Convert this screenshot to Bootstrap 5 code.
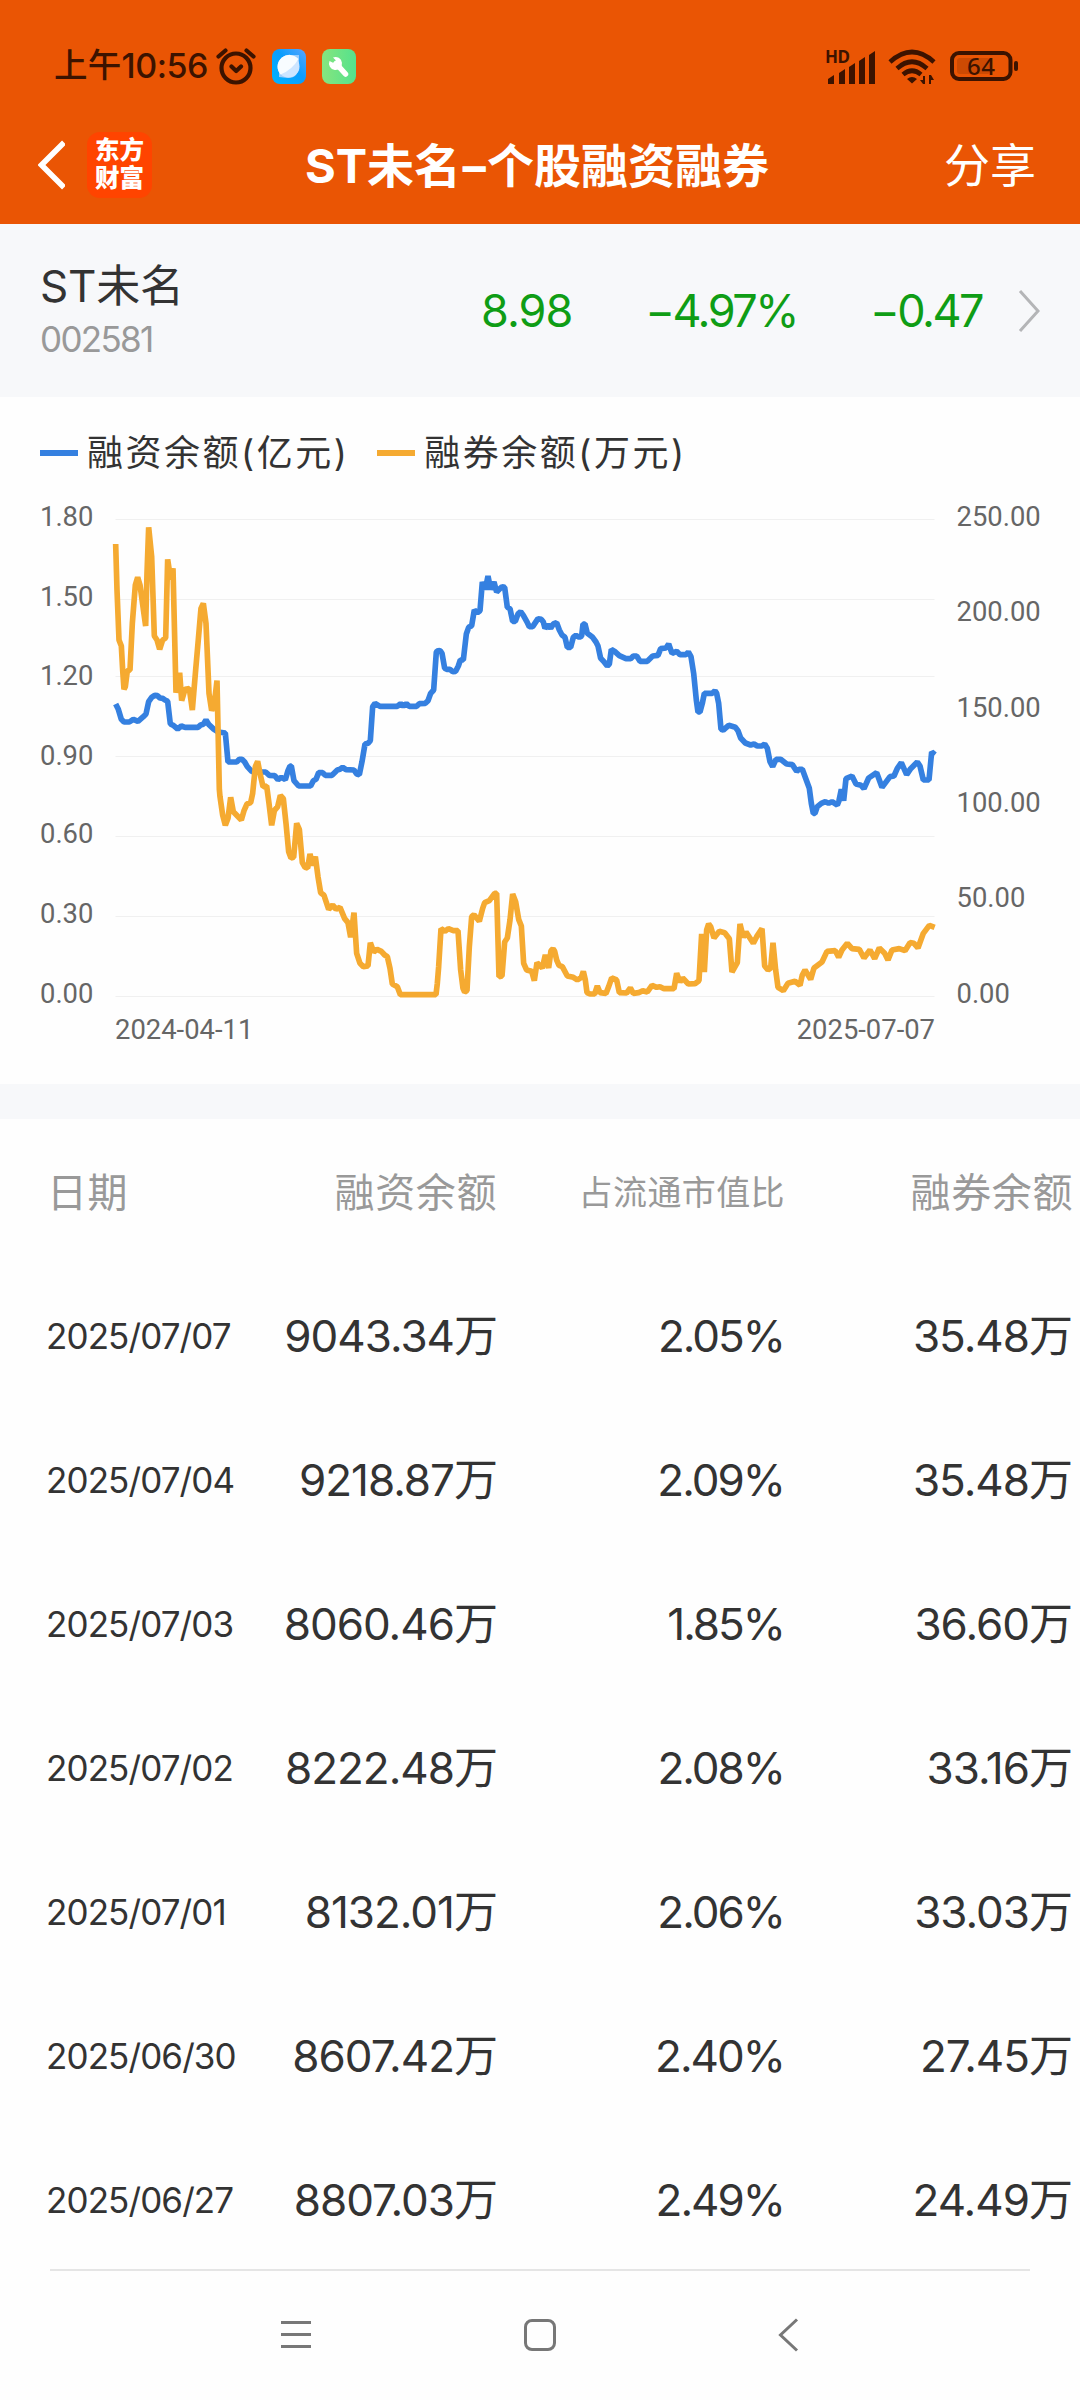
<!DOCTYPE html>
<html lang="zh-CN">
<head>
<meta charset="utf-8">
<meta name="viewport" content="width=device-width, initial-scale=1">
<title>ST未名-个股融资融券</title>
<link href="https://cdn.jsdelivr.net/npm/bootstrap@5.3.0/dist/css/bootstrap.min.css" rel="stylesheet">
<style>
body{width:1080px;height:2400px;overflow:hidden;background:#fefefe;color:#333;font-family:Inter,"Noto Sans CJK SC",sans-serif;line-height:1}
svg{display:block;flex:none}
.topbar{background:#ea5504;height:224px}
.statusbar{height:132px;padding:0 61px 0 54px;color:#3c1300}
.clock{font-size:34px;font-weight:500;letter-spacing:-.5px;width:162px;white-space:nowrap}
.clock .cjk{font-size:33.5px;letter-spacing:.3px}
.titlebar{height:66px;padding:0 44px 0 38px;color:#fff}
.brand{width:65px;height:66px;border-radius:13px;background:#ff4400;font:900 24.500px/28px "Noto Sans CJK SC",sans-serif;margin-left:22px;padding-top:3px}
.heading{font-size:47px;font-weight:700;white-space:nowrap}
.heading .dash{margin:0 -3px}
.share{font-size:46px}
.side{width:200px}
.quote{background:#f7f8fa;height:173px;padding:0 40px}
.code{font-size:35px;color:#999;letter-spacing:-1.700px}
.names{gap:14px}
.stock{font-size:44px;letter-spacing:-.2px}
.green{color:#0f9d15;font-size:45px;letter-spacing:-1px;white-space:nowrap}
.change{letter-spacing:-2.500px;margin-left:73px}
.legend{height:112px;padding:0 40px;font-size:36px;letter-spacing:2.500px}
.swatch{width:38px;height:6px;margin-right:9px}
.swatch.second{margin-left:28px}
.app-icon{margin-left:16px}
.arrow{margin-left:36px}
.chart{overflow:visible}
.chart text{font:27.400px Roboto,sans-serif;fill:#666}
.gap-band{height:35px;background:#f7f8fa}
.thead-line{height:145px;padding-top:2px;font-size:40px;color:#999;letter-spacing:.6px}
.record{height:144px;font-size:44px;letter-spacing:-1px}
.record.last-one{height:141px;padding-top:3px}
.c1{width:196px;padding-left:46px;font-size:35px;letter-spacing:-.9px}
.c2{width:301px}.c3{width:287px;letter-spacing:-2px}.c4{width:288px}
.c1,.c2,.c3,.c4{white-space:nowrap;flex:none}
.thead-line .c1{font-size:40px;letter-spacing:.6px;padding-left:47px}.thead-line .c3{font-size:34px;letter-spacing:.4px;width:288px}
.foot-rule{height:2px;background:#e5e5e5;margin:0 50px}
.navkeys{height:129px}
</style>
</head>
<body>
<header class="topbar">
  <div class="statusbar d-flex align-items-center">
    <div class="clock d-flex align-items-center"><span class="cjk">上午</span><span>10:56</span></div>
    <svg width="40" height="38" viewBox="0 0 40 38" fill="none" stroke="#3c1300" stroke-width="4.200" stroke-linecap="round" stroke-linejoin="round"><circle cx="20" cy="21" r="14.500"/><path d="M2.500 9.500 9.500 3.500M30.500 3.500l7 6M15.500 19.500l4.700 4.500 4.800-4.500"/></svg>
    <svg class="app-icon" width="34" height="35" viewBox="0 0 34 35"><defs><linearGradient id="sky" x1="0" y1="1" x2="1" y2="0"><stop stop-color="#00b4ff"/><stop offset=".55" stop-color="#0a9dfd"/><stop offset="1" stop-color="#5aa5ff"/></linearGradient></defs><rect width="34" height="35" rx="8" fill="url(#sky)"/><path d="M7 28V18C7 10 11 6 18 6h9v9c0 10-4 14-11 14Z" fill="#9ccdfc"/><circle cx="16.500" cy="17.500" r="11" fill="#cde5ff"/><path d="M8.500 25.500A11.300 11.300 0 1 1 26.500 10Q20 21 8.500 25.500Z" fill="#f8fcff"/></svg>
    <svg class="app-icon" width="34" height="35" viewBox="0 0 34 35"><defs><linearGradient id="leaf"><stop stop-color="#86e57e"/><stop offset="1" stop-color="#54e28d"/></linearGradient></defs><rect width="34" height="35" rx="8" fill="url(#leaf)"/><path d="M14 14.500 23.500 25" stroke="#fff" stroke-width="5.500" stroke-linecap="round"/><path d="M11 8.500A6.500 6.500 0 1 1 7.500 12l4 2 2.500-2.500Z" fill="#fff"/></svg>
    <svg class="ms-auto" width="194" height="40" viewBox="826 46 194 40"><g fill="#3c1300"><text x="826" y="62.500" font-family="Noto Sans" font-size="17" font-weight="700" textLength="25">HD</text><path d="M829 84v-5l6-4v9zM840 84V73l6-4v15zM850 84V67l6-4v21zM860 84V61l6-4v27zM870 84V55l6-4v33z"/></g><g fill="none" stroke="#3c1300" stroke-width="4.600"><path d="M891 62Q913 42 935 62M898 68.500Q913 55 928 68.500M904 74.500Q913 67 922 74.500"/></g><path d="M908 79Q913 75 918 79L913 83.500ZM926 76v8h-2l-3-4h3v-4ZM930 84V75h2l3 5h-3v4Z" fill="#3c1300"/><rect x="958" y="58" width="33" height="16" rx="3" fill="#cd4a03"/><rect x="953" y="53" width="58.500" height="26" rx="7" fill="none" stroke="#3c1300" stroke-width="4"/><rect x="1015" y="61" width="4" height="10" rx="2" fill="#3c1300"/><text x="968" y="75" font-family="Noto Sans" font-size="24" font-weight="500" fill="#3c1300" textLength="28">64</text></svg>
  </div>
  <div class="titlebar d-flex align-items-center justify-content-between">
    <div class="side d-flex align-items-center"><svg width="27" height="50" viewBox="0 0 27 50" fill="none" stroke="#fff" stroke-width="5.500"><path d="M26 2.500 3.500 25 26 47.500"/></svg><div class="brand text-center">东方<br>财富</div></div>
    <div class="heading">ST未名<span class="dash">−</span>个股融资融券</div>
    <div class="side share text-end">分享</div>
  </div>
</header>
<section class="quote d-flex align-items-center">
  <div class="names d-flex flex-column me-auto"><span class="stock">ST未名</span><span class="code">002581</span></div>
  <span class="green">8.98</span><span class="green change">−4.97%</span><span class="green change">−0.47</span>
  <svg class="arrow" width="22" height="44" viewBox="0 0 22 44" fill="none" stroke="#b4b5b7" stroke-width="3"><path d="M2 2 20 22 2 42"/></svg>
</section>
<div class="legend d-flex align-items-center">
  <span class="swatch" style="background:#3580e0"></span><span>融资余额(亿元)</span>
  <span class="swatch second" style="background:#f5aa31"></span><span>融券余额(万元)</span>
</div>
<svg class="chart" width="1080" height="575" viewBox="0 509 1080 575">
  <path d="M115.500 519.500H934.500M115.500 599.500H934.500M115.500 676.500H934.500M115.500 756.500H934.500M115.500 836.500H934.500M115.500 916.500H934.500M115.500 996.500H934.500" stroke="#f0f0f0"/>
  <g><text x="40" y="526">1.80</text><text x="40" y="606">1.50</text><text x="40" y="685">1.20</text><text x="40" y="764.500">0.90</text><text x="40" y="843">0.60</text><text x="40" y="923">0.30</text><text x="40" y="1002.500">0.00</text></g>
  <g><text x="956.500" y="526">250.00</text><text x="956.500" y="621">200.00</text><text x="956.500" y="717">150.00</text><text x="956.500" y="812">100.00</text><text x="956.500" y="907">50.00</text><text x="956.500" y="1002.500">0.00</text></g>
  <text x="115" y="1038.500">2024-04-11</text><text x="935" y="1038.500" text-anchor="end">2025-07-07</text>
  <g transform="translate(0 490) scale(.33333)" fill="none" stroke-width="17" stroke-linejoin="bevel">
    <polyline stroke="#3580e0" points="347,642 355,658 364,688 372,696 388,696 400,688 414,694 430,680 438,672 446,635 455,622 464,616 472,617 480,624 488,625 495,630 503,634 511,702 520,706 533,717 544,708 555,712 594,712 602,705 610,703 618,690 626,703 642,718 655,726 676,729 684,816 710,816 718,808 726,808 734,816 742,830 755,844 780,846 797,846 808,856 824,857 834,869 844,862 856,869 864,842 870,828 874,828 882,872 896,888 932,888 940,872 948,868 956,848 968,848 976,856 996,856 1012,840 1020,838 1028,832 1038,839 1062,840 1070,852 1078,854 1086,815 1095,762 1104,760 1111,752 1118,650 1125,640 1140,649 1192,649 1202,641 1210,648 1219,641 1228,649 1250,649 1258,641 1276,640 1284,632 1292,610 1301,600 1309,486 1315,481 1321,483 1326,490 1334,535 1340,538 1350,538 1358,545 1367,544 1375,528 1381,510 1390,510 1399,432 1406,412 1415,407 1423,360 1432,368 1440,362 1447,276 1456,298 1464,258 1472,298 1482,276 1490,306 1498,298 1506,290 1514,292 1522,352 1530,356 1538,394 1546,394 1554,372 1562,365 1570,376 1580,394 1588,410 1598,410 1606,398 1614,386 1624,388 1630,396 1635,415 1644,404 1652,415 1660,402 1670,398 1678,420 1686,435 1695,442 1702,472 1712,472 1720,442 1728,436 1738,442 1745,438 1749,402 1755,402 1762,430 1778,442 1788,456 1794,468 1802,505 1812,515 1822,528 1828,522 1834,478 1844,484 1858,497 1878,506 1892,506 1900,498 1910,498 1920,514 1942,514 1958,498 1974,496 1982,476 1998,474 2006,462 2016,490 2030,484 2040,494 2058,494 2065,486 2073,500 2081,550 2089,630 2094,666 2100,666 2107,640 2113,610 2137,610 2145,602 2150,610 2156,640 2163,718 2170,720 2186,706 2206,712 2214,722 2222,744 2236,759 2252,765 2262,762 2272,768 2286,768 2294,762 2302,775 2310,815 2318,830 2328,808 2342,808 2360,822 2377,824 2390,844 2397,838 2407,838 2418,868 2428,895 2434,940 2440,970 2445,970 2452,950 2464,940 2476,935 2486,940 2496,935 2512,945 2517,932 2524,898 2531,932 2538,866 2556,858 2568,882 2583,886 2592,896 2606,864 2630,848 2646,892 2670,860 2682,858 2692,835 2704,818 2720,854 2732,836 2752,816 2760,828 2770,870 2787,870 2795,786 2805,794"/>
    <polyline stroke="#f5aa31" points="347,162 351,300 357,450 364,468 368,540 372,598 376,590 382,542 390,540 397,400 406,285 413,262 420,285 437,408 441,250 446,112 455,200 463,438 471,450 479,478 488,450 497,444 503,208 512,268 519,235 528,608 539,548 545,632 555,598 568,596 577,660 587,540 594,460 603,355 610,340 618,400 627,610 635,662 643,640 651,572 658,898 660,920 668,975 676,1006 684,985 692,922 700,965 724,990 732,962 741,942 752,938 758,910 766,830 773,814 780,850 789,890 800,888 807,940 815,1006 823,962 833,950 841,916 850,926 858,1000 866,1085 873,1104 881,1102 890,1000 898,1018 907,1118 915,1132 923,1134 930,1092 938,1126 946,1100 954,1160 962,1208 972,1216 986,1258 998,1245 1008,1258 1020,1252 1034,1286 1044,1298 1052,1342 1062,1268 1070,1390 1080,1420 1090,1430 1104,1428 1111,1358 1121,1386 1131,1378 1144,1384 1154,1395 1162,1400 1170,1435 1177,1482 1192,1490 1201,1514 1308,1514 1312,1480 1316,1430 1323,1316 1335,1324 1345,1316 1360,1322 1374,1322 1382,1440 1389,1495 1394,1506 1401,1502 1408,1370 1415,1280 1422,1274 1438,1294 1448,1255 1454,1238 1468,1232 1484,1210 1490,1210 1497,1460 1506,1458 1514,1356 1522,1344 1530,1290 1538,1212 1547,1235 1556,1288 1564,1308 1571,1420 1580,1440 1595,1444 1603,1472 1611,1418 1627,1434 1636,1395 1646,1434 1653,1382 1659,1376 1664,1384 1670,1410 1677,1426 1687,1430 1702,1458 1720,1462 1732,1470 1744,1462 1750,1444 1756,1470 1761,1508 1770,1512 1784,1512 1792,1488 1800,1508 1818,1510 1826,1490 1835,1464 1850,1470 1858,1508 1880,1509 1891,1494 1900,1510 1916,1508 1928,1502 1942,1506 1956,1486 1970,1492 1980,1490 1992,1496 2022,1496 2030,1450 2040,1476 2048,1464 2065,1482 2085,1481 2097,1472 2105,1332 2113,1446 2120,1320 2126,1302 2132,1310 2142,1344 2158,1324 2174,1328 2188,1346 2196,1446 2212,1418 2220,1302 2230,1342 2238,1326 2260,1360 2270,1340 2286,1316 2294,1428 2304,1440 2312,1434 2319,1358 2327,1440 2334,1492 2350,1502 2364,1480 2385,1474 2400,1486 2407,1455 2415,1440 2432,1468 2442,1434 2466,1416 2481,1384 2506,1382 2516,1402 2526,1380 2542,1360 2556,1376 2578,1378 2592,1404 2610,1380 2624,1406 2638,1374 2654,1390 2664,1410 2676,1380 2698,1376 2715,1382 2730,1358 2742,1360 2754,1374 2770,1330 2788,1306 2804,1312"/>
  </g>
</svg>
<div class="gap-band"></div>
<main>
  <div class="thead-line d-flex align-items-center"><div class="c1">日期</div><div class="c2 text-end">融资余额</div><div class="c3 text-end">占流通市值比</div><div class="c4 text-end">融券余额</div></div>
  <div class="record d-flex align-items-center"><div class="c1">2025/07/07</div><div class="c2 text-end">9043.34万</div><div class="c3 text-end">2.05%</div><div class="c4 text-end">35.48万</div></div>
  <div class="record d-flex align-items-center"><div class="c1">2025/07/04</div><div class="c2 text-end">9218.87万</div><div class="c3 text-end">2.09%</div><div class="c4 text-end">35.48万</div></div>
  <div class="record d-flex align-items-center"><div class="c1">2025/07/03</div><div class="c2 text-end">8060.46万</div><div class="c3 text-end">1.85%</div><div class="c4 text-end">36.60万</div></div>
  <div class="record d-flex align-items-center"><div class="c1">2025/07/02</div><div class="c2 text-end">8222.48万</div><div class="c3 text-end">2.08%</div><div class="c4 text-end">33.16万</div></div>
  <div class="record d-flex align-items-center"><div class="c1">2025/07/01</div><div class="c2 text-end">8132.01万</div><div class="c3 text-end">2.06%</div><div class="c4 text-end">33.03万</div></div>
  <div class="record d-flex align-items-center"><div class="c1">2025/06/30</div><div class="c2 text-end">8607.42万</div><div class="c3 text-end">2.40%</div><div class="c4 text-end">27.45万</div></div>
  <div class="record last-one d-flex align-items-center"><div class="c1">2025/06/27</div><div class="c2 text-end">8807.03万</div><div class="c3 text-end">2.49%</div><div class="c4 text-end">24.49万</div></div>
  <div class="foot-rule"></div>
</main>
<nav class="navkeys">
  <svg width="1080" height="129" viewBox="0 2271 1080 129" fill="none" stroke="#777" stroke-width="3"><path d="M281 2322.500h30M281 2334.500h30M281 2346.500h30"/><rect x="525.500" y="2320.500" width="29" height="29" rx="6.500"/><path d="M797 2319.500 780.500 2335 797 2350.500"/></svg>
</nav>
<script src="https://cdn.jsdelivr.net/npm/bootstrap@5.3.0/dist/js/bootstrap.bundle.min.js"></script>
</body>
</html>
